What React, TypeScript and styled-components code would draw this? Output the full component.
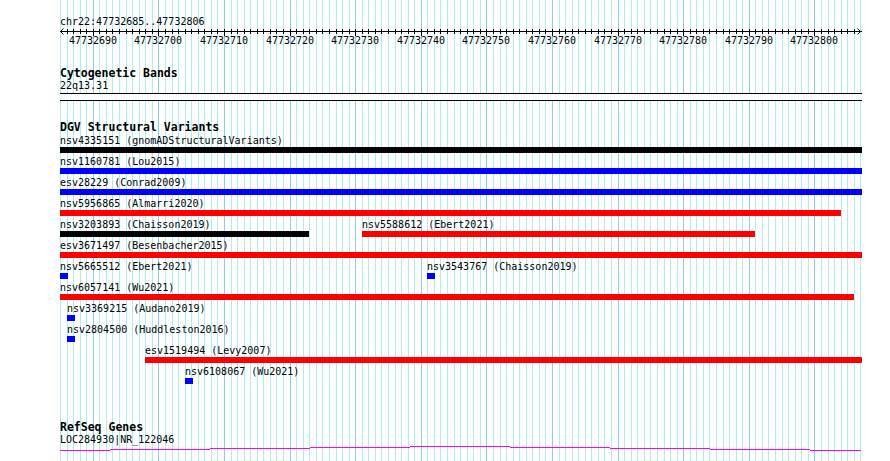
import { FC } from 'react'
import styled, { createGlobalStyle } from 'styled-components'

const START = 47732685
const END = 47732806
const PX_PER_BASE = 6.56
const PANEL_WIDTH = 802
const MIN_FEATURE_WIDTH = 8

const toX = (pos: number) => Math.round((pos - START) * PX_PER_BASE)

type BarColor = 'black' | 'blue' | 'red'

interface Variant {
  id: string
  study: string
  start: number
  end: number
  color: BarColor
}

const barColors: Record<BarColor, string> = {
  black: '#000000',
  blue: '#0000ff',
  red: '#ff0000',
}

// each inner array is one packed row of the DGV track
const variantRows: Variant[][] = [
  [{ id: 'nsv4335151', study: 'gnomADStructuralVariants', start: 47732600, end: 47733200, color: 'black' }],
  [{ id: 'nsv1160781', study: 'Lou2015', start: 47732600, end: 47733200, color: 'blue' }],
  [{ id: 'esv28229', study: 'Conrad2009', start: 47732600, end: 47733200, color: 'blue' }],
  [{ id: 'nsv5956865', study: 'Almarri2020', start: 47732600, end: 47732803, color: 'red' }],
  [
    { id: 'nsv3203893', study: 'Chaisson2019', start: 47732600, end: 47732722, color: 'black' },
    { id: 'nsv5588612', study: 'Ebert2021', start: 47732731, end: 47732790, color: 'red' },
  ],
  [{ id: 'esv3671497', study: 'Besenbacher2015', start: 47732600, end: 47733200, color: 'red' }],
  [
    { id: 'nsv5665512', study: 'Ebert2021', start: 47732685, end: 47732685, color: 'blue' },
    { id: 'nsv3543767', study: 'Chaisson2019', start: 47732741, end: 47732741, color: 'blue' },
  ],
  [{ id: 'nsv6057141', study: 'Wu2021', start: 47732600, end: 47732805, color: 'red' }],
  [{ id: 'nsv3369215', study: 'Audano2019', start: 47732686, end: 47732686, color: 'blue' }],
  [{ id: 'nsv2804500', study: 'Huddleston2016', start: 47732686, end: 47732686, color: 'blue' }],
  [{ id: 'esv1519494', study: 'Levy2007', start: 47732698, end: 47733200, color: 'red' }],
  [{ id: 'nsv6108067', study: 'Wu2021', start: 47732704, end: 47732704, color: 'blue' }],
]

// intron line of the RefSeq gene, drawn as 1px steps
const geneSteps = [
  { x: 0, w: 50, y: 4 },
  { x: 50, w: 100, y: 3 },
  { x: 150, w: 100, y: 2 },
  { x: 250, w: 100, y: 1 },
  { x: 350, w: 100, y: 0 },
  { x: 450, w: 100, y: 1 },
  { x: 550, w: 100, y: 2 },
  { x: 650, w: 100, y: 3 },
  { x: 750, w: 51, y: 4 },
]

const baseCount = END - START + 1
const gridBases = Array.from({ length: baseCount + 1 }, (_, i) => START + i)
const rulerLabels = gridBases.filter((pos) => pos % 10 === 0 && pos < END)

const GlobalStyle = createGlobalStyle`
  html, body {
    margin: 0;
    padding: 0;
    background: #ffffff;
  }
`

const Page = styled.div`
  width: 890px;
  height: 461px;
  overflow: hidden;
  background: #ffffff;
  font-family: 'DejaVu Sans Mono', 'Liberation Mono', monospace;
  color: #000000;
`

const Panel = styled.div`
  position: relative;
  margin-left: 60px;
  width: ${PANEL_WIDTH}px;
  height: 461px;
  padding-top: 15px;
  box-sizing: border-box;
`

const GridLayer = styled.svg`
  position: absolute;
  top: 0;
  left: 0;
  z-index: 0;
`

const Content = styled.div`
  position: relative;
  z-index: 1;
  display: flex;
  flex-direction: column;
`

const Locator = styled.div`
  font-size: 10px;
  line-height: 13px;
  white-space: nowrap;
`

const RulerSvg = styled.svg`
  display: block;
  overflow: visible;
`

const Track = styled.section<{ $gap: number }>`
  display: flex;
  flex-direction: column;
  margin-top: ${({ $gap }) => $gap}px;
`

const TrackTitle = styled.div`
  font-size: 11.5px;
  font-weight: 700;
  line-height: 13px;
  white-space: nowrap;
`

const TrackLabel = styled.div`
  font-size: 10px;
  line-height: 11px;
  white-space: nowrap;
`

const BandBox = styled.div`
  margin-top: 2px;
  height: 8px;
  box-sizing: border-box;
  border-top: 1px solid #000000;
  border-bottom: 1px solid #000000;
  background: #ffffff;
`

const VariantRows = styled.div`
  display: flex;
  flex-direction: column;
  margin-top: 1px;
`

const Row = styled.div`
  position: relative;
  height: 21px;
`

const Feature = styled.div`
  position: absolute;
  top: 0;
  display: flex;
  flex-direction: column;
  align-items: flex-start;
`

const FeatureLabel = styled.span`
  font-size: 10px;
  line-height: 11px;
  white-space: nowrap;
`

const Bar = styled.div<{ $color: BarColor }>`
  margin-top: 1px;
  height: 6px;
  background: ${({ $color }) => barColors[$color]};
`

const GeneLine = styled.svg`
  display: block;
  margin-top: 1px;
`

const Grid: FC = () => (
  <GridLayer width={PANEL_WIDTH} height={461} shapeRendering="crispEdges">
    {gridBases.map((pos) => (
      <rect
        key={pos}
        x={toX(pos)}
        y={0}
        width={1}
        height={461}
        fill={pos % 10 === 0 ? '#8fcdf0' : '#afeeee'}
      />
    ))}
  </GridLayer>
)

const Ruler: FC = () => (
  <RulerSvg width={PANEL_WIDTH} height={20}>
    <g shapeRendering="crispEdges">
      <rect x={0} y={3} width={PANEL_WIDTH} height={1} fill="#000" />
      {gridBases.slice(1, -1).map((pos) => (
        <rect key={pos} x={toX(pos)} y={1} width={1} height={pos % 10 === 0 ? 7 : 5} fill="#000" />
      ))}
    </g>
    <path d="M3.5 0.5 L0.5 3.5 L3.5 6.5" stroke="#000" strokeWidth={1} fill="none" />
    <path d={`M${PANEL_WIDTH - 4.5} 0.5 L${PANEL_WIDTH - 1.5} 3.5 L${PANEL_WIDTH - 4.5} 6.5`} stroke="#000" strokeWidth={1} fill="none" />
    {rulerLabels.map((pos) => (
      <text
        key={pos}
        x={toX(pos)}
        y={16}
        textAnchor="middle"
        fontFamily="'DejaVu Sans Mono', 'Liberation Mono', monospace"
        fontSize={10}
        fill="#000"
      >
        {pos}
      </text>
    ))}
  </RulerSvg>
)

const VariantFeature: FC<{ variant: Variant }> = ({ variant }) => {
  const left = Math.max(toX(variant.start), 0)
  const right = Math.min(toX(variant.end + 1), PANEL_WIDTH)
  const width = Math.max(right - left, MIN_FEATURE_WIDTH)

  return (
    <Feature style={{ left }}>
      <FeatureLabel>{`${variant.id} (${variant.study})`}</FeatureLabel>
      <Bar $color={variant.color} style={{ width }} />
    </Feature>
  )
}

const App: FC = () => {
  return (
    <>
      <GlobalStyle />
      <Page>
        <Panel>
          <Grid />
          <Content>
            <Locator>{`chr22:${START}..${END}`}</Locator>
            <Ruler />

            <Track $gap={19}>
              <TrackTitle>Cytogenetic Bands</TrackTitle>
              <TrackLabel>22q13.31</TrackLabel>
              <BandBox />
            </Track>

            <Track $gap={20}>
              <TrackTitle>DGV Structural Variants</TrackTitle>
              <VariantRows>
                {variantRows.map((row, index) => (
                  <Row key={index}>
                    {row.map((variant) => (
                      <VariantFeature key={variant.id} variant={variant} />
                    ))}
                  </Row>
                ))}
              </VariantRows>
            </Track>

            <Track $gap={34}>
              <TrackTitle>RefSeq Genes</TrackTitle>
              <TrackLabel>LOC284930|NR_122046</TrackLabel>
              <GeneLine width={PANEL_WIDTH} height={5} shapeRendering="crispEdges">
                {geneSteps.map((step) => (
                  <rect key={step.x} x={step.x} y={step.y} width={step.w} height={1} fill="#ff00ff" />
                ))}
              </GeneLine>
            </Track>
          </Content>
        </Panel>
      </Page>
    </>
  )
}

export default App
